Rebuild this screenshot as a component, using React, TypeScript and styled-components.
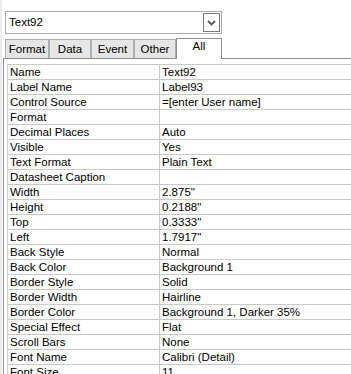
import React from "react";
import styled, { createGlobalStyle } from "styled-components";

const GlobalStyle = createGlobalStyle`
  html, body {
    margin: 0;
    padding: 0;
    background: #fff;
  }
  body {
    font-family: "Liberation Sans", Arial, sans-serif;
    font-size: 11.5px;
    color: #000;
  }
`;

// === Sheet ===
const Page = styled.div`
  width: 349px;
  height: 374px;
  overflow: hidden;
  border-left: 2px solid #ececec;
  padding-top: 11px;
  box-sizing: content-box;
`;

const Combo = styled.div`
  display: flex;
  align-items: center;
  justify-content: space-between;
  width: 212px;
  height: 21px;
  margin-left: 3px;
  border: 1px solid #ababab;
  padding-left: 3px;
  box-sizing: content-box;
`;

const ComboText = styled.span`
  line-height: 21px;
`;

const DropButton = styled.div`
  display: flex;
  align-items: center;
  justify-content: center;
  width: 15px;
  height: 17px;
  margin-right: 1px;
  border: 1px solid #7a7a7a;
  background: #fff;
`;

const TabRow = styled.div`
  display: flex;
  align-items: flex-start;
  height: 20px;
  margin-top: 4px;
  margin-left: 3px;
  position: relative;
  z-index: 1;
`;

const Tab = styled.div<{ $w: number; $active?: boolean }>`
  width: ${(p) => p.$w}px;
  box-sizing: border-box;
  text-align: center;
  border: 1px solid ${(p) => (p.$active ? "#8e8f9a" : "#adadad")};
  border-bottom: none;
  background: ${(p) => (p.$active ? "#fff" : "#e6e6e6")};
  height: ${(p) => (p.$active ? 21 : 19)}px;
  margin-top: ${(p) => (p.$active ? 0 : 1)}px;
  line-height: ${(p) => (p.$active ? 15 : 19)}px;
`;

const Panel = styled.div`
  margin-left: 1px;
  border-top: 1px solid #8e8f9a;
  border-left: 1px solid #8e8f9a;
  padding: 5px 0 0 3px;
`;

const Grid = styled.div`
  display: grid;
  grid-template-columns: 152px 1fr;
  border-top: 1px solid #c9c9c9;
  border-left: 1px solid #c9c9c9;
`;

const Cell = styled.div<{ $label?: boolean }>`
  height: 14px;
  line-height: 15px;
  padding-left: ${(p) => (p.$label ? 2 : 2)}px;
  border-bottom: 1px solid #c9c9c9;
  border-right: ${(p) => (p.$label ? "1px solid #c9c9c9" : "none")};
  white-space: nowrap;
  overflow: hidden;
`;

const props: [string, string][] = [
  ["Name", "Text92"],
  ["Label Name", "Label93"],
  ["Control Source", "=[enter User name]"],
  ["Format", ""],
  ["Decimal Places", "Auto"],
  ["Visible", "Yes"],
  ["Text Format", "Plain Text"],
  ["Datasheet Caption", ""],
  ["Width", "2.875\""],
  ["Height", "0.2188\""],
  ["Top", "0.3333\""],
  ["Left", "1.7917\""],
  ["Back Style", "Normal"],
  ["Back Color", "Background 1"],
  ["Border Style", "Solid"],
  ["Border Width", "Hairline"],
  ["Border Color", "Background 1, Darker 35%"],
  ["Special Effect", "Flat"],
  ["Scroll Bars", "None"],
  ["Font Name", "Calibri (Detail)"],
  ["Font Size", "11"],
];

const tabs: [string, number][] = [
  ["Format", 44],
  ["Data", 42],
  ["Event", 43],
  ["Other", 42],
];

export default function App() {
  return (
    <>
      <GlobalStyle />
      <Page>
        <Combo>
          <ComboText>Text92</ComboText>
          <DropButton>
            <svg width="9" height="6" viewBox="0 0 9 6">
              <polyline points="1,1 4.5,4.5 8,1" fill="none" stroke="#555" strokeWidth="1.8" />
            </svg>
          </DropButton>
        </Combo>
        <TabRow>
          {tabs.map(([t, w]) => (
            <Tab key={t} $w={w}>
              {t}
            </Tab>
          ))}
          <Tab $w={46} $active>
            All
          </Tab>
        </TabRow>
        <Panel>
          <Grid>
            {props.map(([k, v]) => (
              <React.Fragment key={k}>
                <Cell $label>{k}</Cell>
                <Cell>{v}</Cell>
              </React.Fragment>
            ))}
          </Grid>
        </Panel>
      </Page>
    </>
  );
}
